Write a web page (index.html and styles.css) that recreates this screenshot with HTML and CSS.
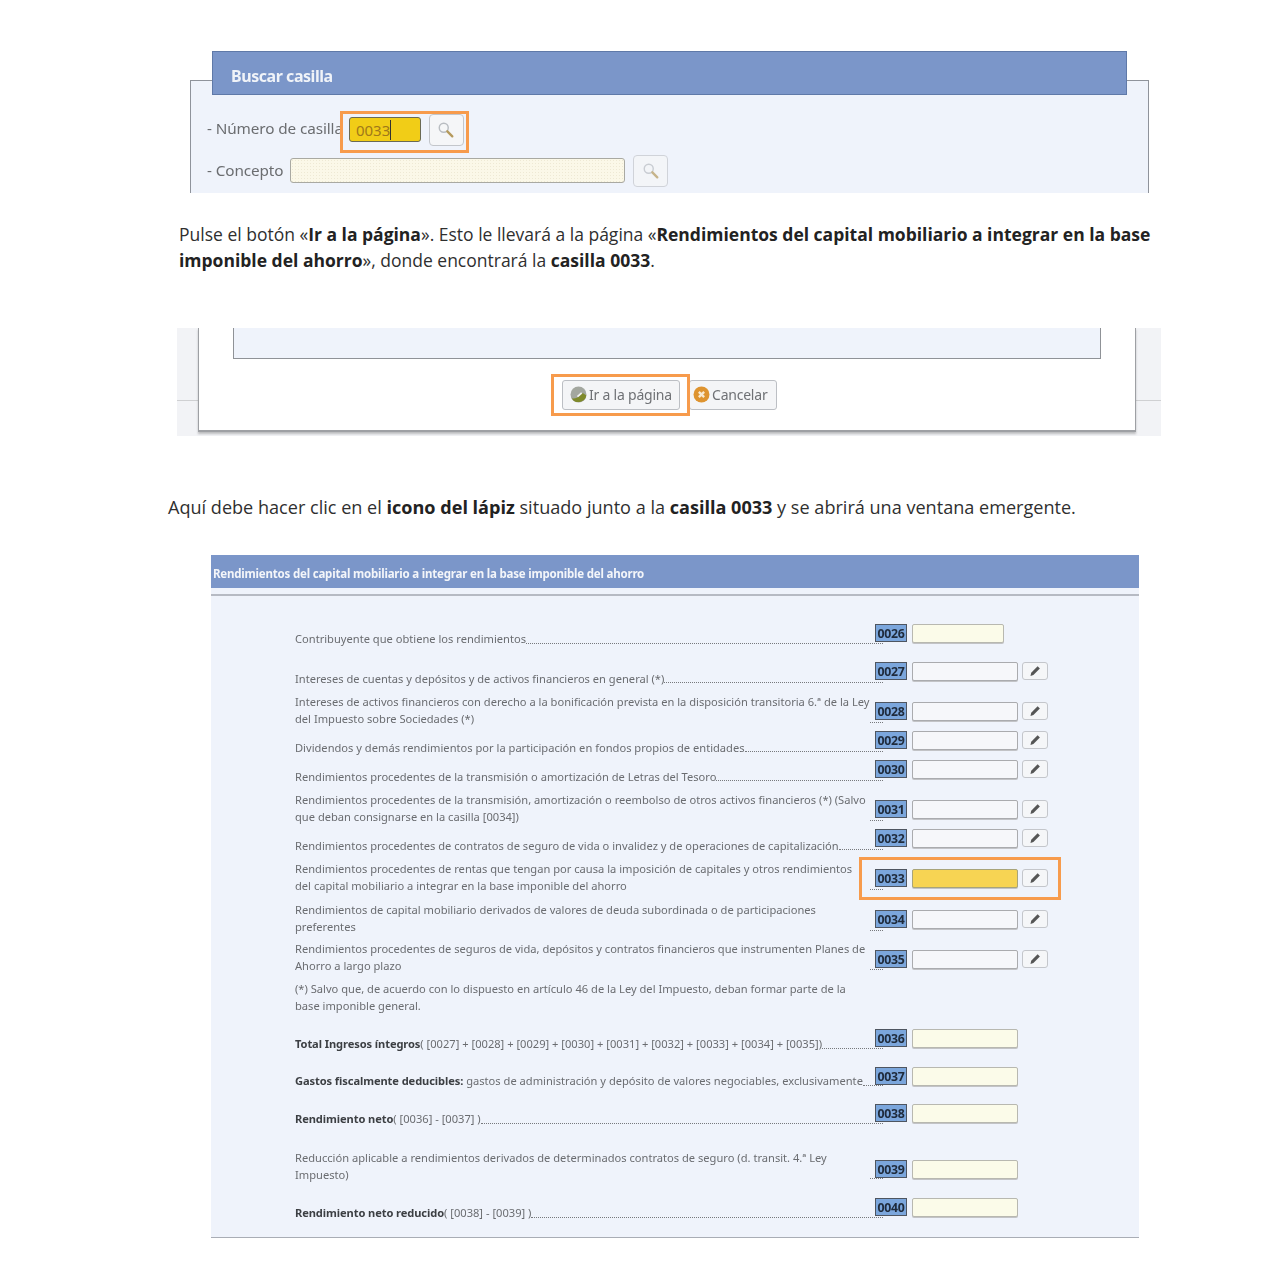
FILE: index.html
```html
<!DOCTYPE html>
<html lang="es">
<head>
<meta charset="utf-8">
<title>Casilla 0033</title>
<link rel="stylesheet" href="styles.css">
</head>
<body>
<svg class="defs" width="0" height="0" aria-hidden="true">
  <symbol id="lens" viewBox="0 0 20 20">
    <circle cx="7.5" cy="7.5" r="5" fill="#f6f7f8" stroke="#b9bdc2" stroke-width="1.6"/>
    <path d="M11.5 11.5 17 17" stroke="#b59a5c" stroke-width="2.6" stroke-linecap="round"/>
  </symbol>
  <symbol id="pencil" viewBox="0 0 14 14">
    <path d="M2.5 12 3.2 8.8 9.6 2.2 11.9 4.4 5.4 11Z" fill="#555"/>
  </symbol>
</svg>

<section class="shot search">
  <div class="search-box">
    <h2 class="search-title">Buscar casilla</h2>
    <div class="search-row first">
      <span class="search-label">- Número de casilla</span>
      <span class="search-input active">0033<i class="caret"></i></span>
      <span class="search-btn"><svg class="lens"><use href="#lens"/></svg></span>
    </div>
    <div class="search-row">
      <span class="search-label">- Concepto</span>
      <span class="search-input wide"></span>
      <span class="search-btn faded"><svg class="lens"><use href="#lens"/></svg></span>
    </div>
    <div class="mark mark-search"></div>
  </div>
</section>

<p class="copy first-copy">Pulse el botón «<b>Ir a la página</b>». Esto le llevará a la página «<b>Rendimientos del capital mobiliario a integrar en la base</b><br><b>imponible del ahorro</b>», donde encontrará la <b>casilla 0033</b>.</p>

<section class="shot dialog-shot">
  <div class="dialog">
    <div class="dialog-panel"></div>
    <div class="dialog-actions">
      <span class="dlg-btn go">
        <svg class="dlg-icon" viewBox="0 0 16 16"><circle cx="8" cy="8" r="7.5" fill="#a3a79f"/><path d="M1.6 11.5C4 12 7 11.6 9 9.5L12 6.5 15.4 9A7.5 7.5 0 0 1 1.6 11.5Z" fill="#7f8a2b"/><path d="M7 10 11 6.5" stroke="#f2f2f2" stroke-width="1.6"/></svg>Ir a la página
      </span>
      <span class="dlg-btn cancel">
        <svg class="dlg-icon" viewBox="0 0 16 16"><circle cx="8" cy="8" r="7.5" fill="#de9430"/><path d="M5.5 5.5 10.5 10.5M10.5 5.5 5.5 10.5" stroke="#f8ead2" stroke-width="2.2"/></svg>Cancelar
      </span>
      <div class="mark mark-go"></div>
    </div>
  </div>
</section>

<p class="copy second-copy">Aquí debe hacer clic en el <b>icono del lápiz</b> situado junto a la <b>casilla 0033</b> y se abrirá una ventana emergente.</p>

<section class="shot form">
  <h2 class="form-title">Rendimientos del capital mobiliario a integrar en la base imponible del ahorro</h2>
  <div class="form-body">
    <div class="row r50 tight">
      <div class="label"><span>Contribuyente que obtiene los rendimientos</span><i class="dots"></i></div>
      <b class="code">0026</b><span class="field short fill"></span>
    </div>
    <div class="row r38">
      <div class="label"><span>Intereses de cuentas y depósitos y de activos financieros en general (*)</span><i class="dots"></i></div>
      <b class="code">0027</b><span class="field"></span><span class="edit"><svg class="pencil"><use href="#pencil"/></svg></span>
    </div>
    <div class="row r40">
      <div class="label two"><span>Intereses de activos financieros con derecho a la bonificación prevista en la disposición transitoria 6.ª de la Ley<br>del Impuesto sobre Sociedades (*)</span><i class="dots tick"></i></div>
      <b class="code">0028</b><span class="field"></span><span class="edit"><svg class="pencil"><use href="#pencil"/></svg></span>
    </div>
    <div class="row r29">
      <div class="label"><span>Dividendos y demás rendimientos por la participación en fondos propios de entidades</span><i class="dots"></i></div>
      <b class="code">0029</b><span class="field"></span><span class="edit"><svg class="pencil"><use href="#pencil"/></svg></span>
    </div>
    <div class="row r29">
      <div class="label"><span>Rendimientos procedentes de la transmisión o amortización de Letras del Tesoro</span><i class="dots"></i></div>
      <b class="code">0030</b><span class="field"></span><span class="edit"><svg class="pencil"><use href="#pencil"/></svg></span>
    </div>
    <div class="row r40">
      <div class="label two"><span>Rendimientos procedentes de la transmisión, amortización o reembolso de otros activos financieros (*) (Salvo<br>que deban consignarse en la casilla [0034])</span><i class="dots tick"></i></div>
      <b class="code">0031</b><span class="field"></span><span class="edit"><svg class="pencil"><use href="#pencil"/></svg></span>
    </div>
    <div class="row r29">
      <div class="label"><span>Rendimientos procedentes de contratos de seguro de vida o invalidez y de operaciones de capitalización</span><i class="dots"></i></div>
      <b class="code">0032</b><span class="field"></span><span class="edit"><svg class="pencil"><use href="#pencil"/></svg></span>
    </div>
    <div class="row r40">
      <div class="label two"><span>Rendimientos procedentes de rentas que tengan por causa la imposición de capitales y otros rendimientos<br>del capital mobiliario a integrar en la base imponible del ahorro</span><i class="dots tick"></i></div>
      <b class="code">0033</b><span class="field hot"></span><span class="edit"><svg class="pencil"><use href="#pencil"/></svg></span>
      <div class="mark mark-row"></div>
    </div>
    <div class="row r41">
      <div class="label two"><span>Rendimientos de capital mobiliario derivados de valores de deuda subordinada o de participaciones<br>preferentes</span><i class="dots tick"></i></div>
      <b class="code">0034</b><span class="field"></span><span class="edit"><svg class="pencil"><use href="#pencil"/></svg></span>
    </div>
    <div class="row r40">
      <div class="label two up"><span>Rendimientos procedentes de seguros de vida, depósitos y contratos financieros que instrumenten Planes de<br>Ahorro a largo plazo</span><i class="dots tick"></i></div>
      <b class="code">0035</b><span class="field"></span><span class="edit"><svg class="pencil"><use href="#pencil"/></svg></span>
    </div>
    <p class="note">(*) Salvo que, de acuerdo con lo dispuesto en artículo 46 de la Ley del Impuesto, deban formar parte de la<br>base imponible general.</p>
    <div class="row r38 tight">
      <div class="label"><span><b>Total Ingresos íntegros</b>( [0027] + [0028] + [0029] + [0030] + [0031] + [0032] + [0033] + [0034] + [0035])</span><i class="dots"></i></div>
      <b class="code">0036</b><span class="field fill"></span>
    </div>
    <div class="row r38 tight nudge">
      <div class="label"><span><b>Gastos fiscalmente deducibles:</b> gastos de administración y depósito de valores negociables, exclusivamente</span><i class="dots"></i></div>
      <b class="code">0037</b><span class="field fill"></span>
    </div>
    <div class="row r37 tight">
      <div class="label"><span><b>Rendimiento neto</b>( [0036] - [0037] )</span><i class="dots"></i></div>
      <b class="code">0038</b><span class="field fill"></span>
    </div>
    <div class="row r56">
      <div class="label low"><span>Reducción aplicable a rendimientos derivados de determinados contratos de seguro (d. transit. 4.ª Ley<br>Impuesto)</span><i class="dots tick"></i></div>
      <b class="code">0039</b><span class="field fill"></span>
    </div>
    <div class="row r38 tight">
      <div class="label"><span><b>Rendimiento neto reducido</b>( [0038] - [0039] )</span><i class="dots"></i></div>
      <b class="code">0040</b><span class="field fill"></span>
    </div>
  </div>
</section>
</body>
</html>
```

FILE: styles.css
```css
* { box-sizing: border-box; }
html, body { margin: 0; padding: 0; background: #fff; }
body { width: 1288px; height: 1278px; overflow: hidden; font-family: "Open Sans", "Noto Sans", sans-serif; color: #333; }
.defs { position: absolute; }

.copy { margin: 0; line-height: 26px; color: #2f2f2f; white-space: nowrap; }
.copy b { font-weight: 700; color: #222; }
.first-copy { margin: 28px 0 0 179px; font-size: 17.5px; }
.second-copy { margin: 58px 0 0 168px; font-size: 18.08px; }

.shot { font-family: "Noto Sans", "Open Sans", sans-serif; filter: blur(.35px); }
.mark { position: absolute; border: 3px solid #f79b4c; pointer-events: none; }

/* search panel */
.search { width: 959px; height: 142px; margin: 51px 0 0 190px; padding-top: 29px; overflow: hidden; }
.search-box { position: relative; height: 113px; background: #eff3fb; border: 1px solid #8f939b; border-bottom: 0; }
.search-title { height: 44px; margin: -30px 21px 0 21px; padding: 12px 0 0 18px; background: #7b96c9; border: 1px solid #5f79a8; font-size: 16px; line-height: 24px; font-weight: 700; color: #f0f3f8; letter-spacing: -.45px; }
.search-row { display: flex; align-items: center; height: 32px; margin: 9px 0 0 16px; color: #6b6d70; }
.search-row.first { margin-top: 19px; }
.search-label { font-size: 15.3px; letter-spacing: -.1px; white-space: nowrap; margin: 0 7px 2px 0; }
.first .search-label { margin: 0 6px 4px 0; }
.search-input { position: relative; display: block; width: 335px; height: 25px; margin-bottom: 2px; background: #fbf8e8 radial-gradient(#eee9d4 .6px, transparent .8px) 0 0 / 3px 3px; border: 1px solid #a9a9a2; border-radius: 3px; }
.search-input.active { flex: none; width: 72px; margin-left: 0; padding-left: 6px; background: #f1cd17; border-color: #6a6a55; font-size: 15px; line-height: 25px; color: #a0791a; }
.caret { position: absolute; left: 40px; top: 2px; width: 1px; height: 20px; background: #333; }
.search-btn { flex: none; display: flex; align-items: center; justify-content: center; width: 35px; height: 32px; margin-left: 8px; background: #f5f6f8; border: 1px solid #c3c6cb; border-radius: 4px; }
.search-btn.faded { opacity: .7; }
.lens { width: 18px; height: 18px; }
.mark-search { left: 149px; top: 30px; width: 129px; height: 42px; }

/* dialog */
.dialog-shot { width: 984px; height: 108px; margin: 55px 0 0 177px; padding: 0 25px 0 21px; background: linear-gradient(#f2f3f6 72px, #cfd0d2 72px, #cfd0d2 73px, #f2f3f6 73px); }
.dialog { height: 104px; background: #fff; border: 1px solid #9ea0a4; border-top: 0; border-bottom-width: 2px; box-shadow: 0 2px 2px rgba(90, 90, 90, .35); padding: 0 34px; }
.dialog-panel { height: 31px; background: #eff3fb; border: 1px solid #8f9297; border-top: 0; }
.dialog-actions { position: relative; display: flex; justify-content: center; gap: 9px; padding: 21px 0 0 5px; }
.dlg-btn { display: flex; align-items: center; gap: 2px; height: 30px; padding-bottom: 2px; background: #f4f5f7; border: 1px solid #bcbfc4; border-radius: 3px; font-size: 14px; letter-spacing: -.22px; color: #6f7175; white-space: nowrap; }
.dlg-btn.go { width: 118px; padding-left: 7px; }
.dlg-btn.cancel { width: 88px; padding-left: 3px; }
.dlg-icon { width: 17px; height: 17px; flex: none; }
.mark-go { left: 318px; top: 15px; width: 139px; height: 42px; }

/* form */
.form { width: 928px; margin: 35px 0 0 211px; background: #eff3fb; height: 683px; border-bottom: 1px solid #a9adb5; }
.form-title { height: 33px; margin: 0; padding-left: 2px; background: #7b96c9; font-size: 11.5px; line-height: 38px; font-weight: 700; color: #f3f5f9; letter-spacing: -.2px; white-space: nowrap; }
.form-body { margin-top: 6px; padding-left: 84px; border-top: 2px solid #b6bac3; }
.row { position: relative; display: flex; align-items: flex-end; }
.r29 { height: 29px; } .r37 { height: 37px; } .r38 { height: 38px; } .r40 { height: 40px; }
.r41 { height: 41px; } .r50 { height: 50px; } .r56 { height: 56px; }
.label { flex: none; display: flex; width: 575px; margin: 0 5px -3px 0; font-size: 11.13px; line-height: 17px; color: #6a6c70; white-space: nowrap; }
.label b { color: #3c3f43; letter-spacing: -.1px; }
.tight .label { margin-bottom: -1px; }
.nudge .label { margin-bottom: 0; }
.up { margin-bottom: -2px; }
.low { margin-bottom: -1px; }
.dots { flex: 1 1 0; align-self: flex-end; height: 1px; margin: 0 -13px 4px 0; border-bottom: 1px dotted #77797d; }
.tight .dots { margin-bottom: 3px; }
.dots.tick { flex: 0 0 13px; margin-left: auto; margin-bottom: 4px; }
.code { position: relative; flex: none; width: 32px; height: 18px; margin-bottom: 4px; background: #7ba6dc; border: 1px solid #4e5560; font-size: 12.3px; line-height: 17px; text-align: center; color: #1f2b3c; letter-spacing: -.25px; }
.field { flex: none; width: 106px; height: 19px; margin: 0 0 3px 5px; background: #f6f7fa; border: 1px solid #aaabae; border-radius: 2px; box-shadow: 0 1px 0 #c2c3c6; }
.field.fill { background: #fbfbe9; border-color: #b8b8b0; }
.field.short { width: 92px; }
.field.hot { background: #f7d453; border-color: #a8a47a; }
.edit { flex: none; display: flex; align-items: center; justify-content: center; width: 26px; height: 18px; margin: 0 0 4px 4px; background: #f5f6f8; border: 1px solid #c4c6cb; border-radius: 3px; }
.pencil { width: 14px; height: 14px; }
.note { height: 41px; margin: 0; padding-top: 8px; font-size: 11.13px; line-height: 17px; color: #6a6c70; white-space: nowrap; }
.mark-row { left: 564px; top: 6px; width: 202px; height: 43px; }
```
